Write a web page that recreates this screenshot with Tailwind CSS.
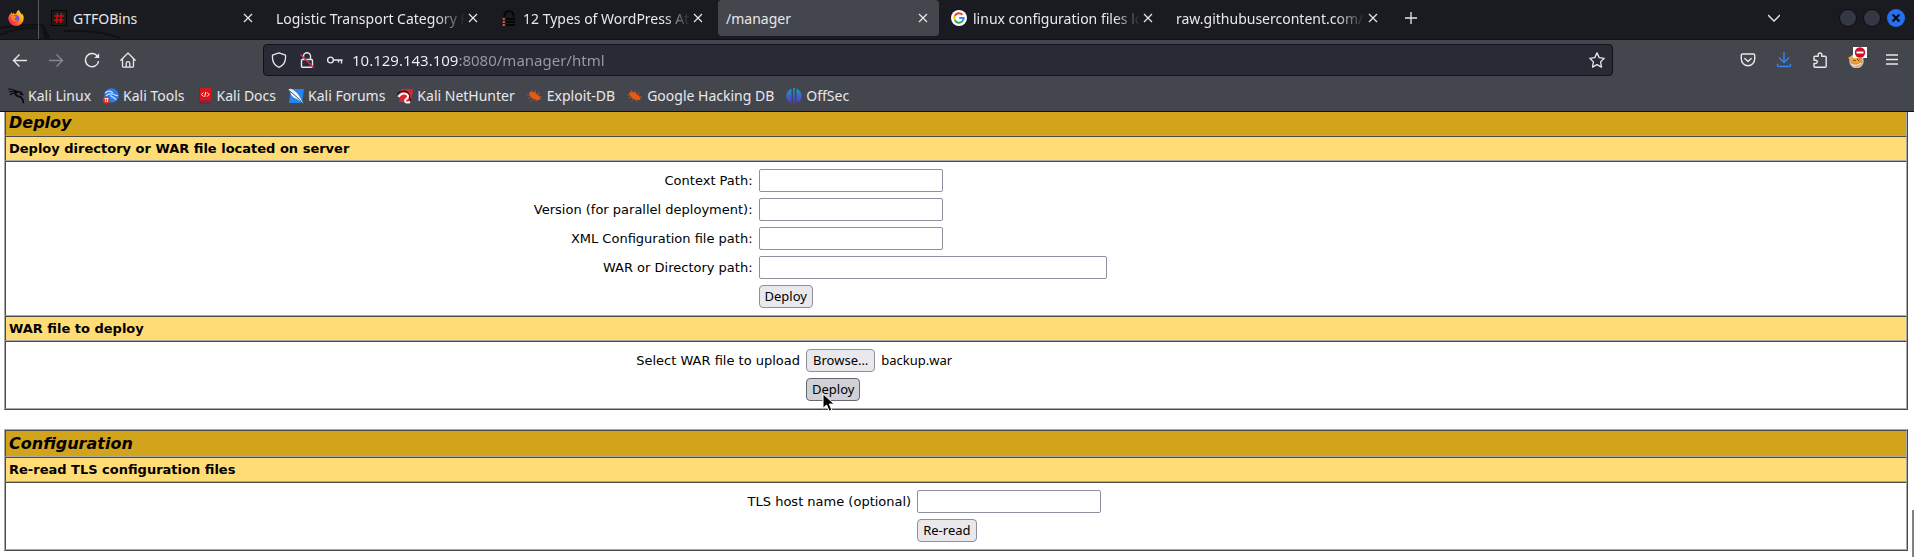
<!DOCTYPE html>
<html lang="en">
<head>
<meta charset="utf-8">
<title>/manager</title>
<script src="https://cdn.jsdelivr.net/npm/@tailwindcss/browser@4"></script>
</head>
<body class="relative flex min-h-screen flex-col overflow-x-hidden bg-white font-['Noto_Sans',sans-serif] text-[14px] text-[#e8e8ea]">

<!-- Tab strip -->
<header class="relative flex h-10 items-start border-b border-[#111216] bg-[#1a1b20]">
  <svg class="absolute bottom-0 left-0 h-4 w-32" viewBox="0 0 128 16" fill="none" aria-hidden="true"><path d="M0 5C14 3 30 1 43 2l6 13M0 12c14-6 26-8 38-7M64 8c20-1 40 1 56 7" stroke="#101115" stroke-width="2"/><path d="M42 3l8 13H44z" fill="#101115"/></svg>
  <div class="relative flex h-[39px] w-[39px] items-start border-r border-[#5a5b60] pt-[10px] pl-2">
    <svg class="size-4" viewBox="0 0 16 16" aria-label="Firefox">
      <defs><linearGradient id="ff" x1="1" y1="0" x2="0" y2="1"><stop offset="0" stop-color="#fff44f"/><stop offset=".45" stop-color="#ff980e"/><stop offset=".75" stop-color="#ff3647"/><stop offset="1" stop-color="#e31587"/></linearGradient></defs>
      <path d="M15.4 5.7c-.4-.9-1.1-1.8-1.7-2.1.4.8.7 1.600.7 2.100C13.500 3.500 12 2.600 10.800.100 9 1 8.300 2.800 8.200 3.700c-.6 0-1.300.2-1.700.4C6 3.700 6 3 6.100 2.500c-.8.3-1.400 1-1.800 1.500C4 3.600 4 2.700 4 2.300 3 2.800 2.500 3.500 2 4.200.8 5.700.300 7 .300 8.500a7.700 7.500 0 0 0 15.400 0c0-1-.1-2-.3-2.800z" fill="url(#ff)"/>
      <circle cx="7.800" cy="8.500" r="3.600" fill="#7a4fe8"/><path d="M3.500 6c1.200-.7 2.500-.5 3.300.3l1.700.4c0 1-1.600 1.100-2 2.100.3 1.800 2.400 1.900 3.800 1-1 2-5.500 2.500-6.800-1.300z" fill="#ff8a16"/>
    </svg>
  </div>
  <nav class="relative ml-0.5 flex min-w-0" aria-label="Tabs">
    <div class="mx-0.5 flex h-9 w-[221px] items-center rounded-b px-2">
      <svg class="mr-1.5 size-4 shrink-0" viewBox="0 0 16 16"><rect width="16" height="16" fill="#050505"/><rect x="1" y="1" width="14" height="14" fill="#1b1b1b"/><path d="M6.500 3L5.500 13M10.500 3L9.500 13M3.500 6h9.500M3 10h9.500" stroke="#c80f12" stroke-width="1.500"/></svg>
      <span class="min-w-0 flex-1 whitespace-nowrap">GTFOBins</span>
      <button class="flex w-4 shrink-0 justify-center" aria-label="Close tab"><svg class="size-2.5" viewBox="0 0 10 10" stroke="currentColor" stroke-width="1.200"><path d="M1 1l8 8M9 1L1 9"/></svg></button>
    </div>
    <div class="mx-0.5 flex h-9 w-[221px] items-center rounded-b px-2">
      <span class="min-w-0 flex-1 mask-r-from-85% mask-r-to-100% whitespace-nowrap">Logistic Transport Category F</span>
      <button class="flex w-4 shrink-0 justify-center" aria-label="Close tab"><svg class="size-2.5" viewBox="0 0 10 10" stroke="currentColor" stroke-width="1.200"><path d="M1 1l8 8M9 1L1 9"/></svg></button>
    </div>
    <div class="mx-0.5 flex h-9 w-[221px] items-center rounded-b px-2">
      <svg class="mr-1.5 size-4 shrink-0" viewBox="0 0 16 16" fill="none"><path d="M3.500 6.500V5.500a4.500 4.500 0 0 1 9 0v1" stroke="#050505" stroke-width="2"/><path d="M5 9h9M5 12h9M5 15h9" stroke="#050505" stroke-width="2"/><path d="M2.800 8v8" stroke="#e8573a" stroke-width="2" stroke-dasharray="2 1"/></svg>
      <span class="min-w-0 flex-1 mask-r-from-85% mask-r-to-100% whitespace-nowrap">12 Types of WordPress Att</span>
      <button class="flex w-4 shrink-0 justify-center" aria-label="Close tab"><svg class="size-2.5" viewBox="0 0 10 10" stroke="currentColor" stroke-width="1.200"><path d="M1 1l8 8M9 1L1 9"/></svg></button>
    </div>
    <div class="mx-0.5 flex h-9 w-[221px] items-center rounded bg-[#44464d] px-2">
      <span class="min-w-0 flex-1 whitespace-nowrap">/manager</span>
      <button class="flex w-4 shrink-0 justify-center" aria-label="Close tab"><svg class="size-2.5" viewBox="0 0 10 10" stroke="currentColor" stroke-width="1.200"><path d="M1 1l8 8M9 1L1 9"/></svg></button>
    </div>
    <div class="mx-0.5 flex h-9 w-[221px] items-center rounded-b px-2">
      <svg class="mr-1.5 size-4 shrink-0" viewBox="0 0 16 16" fill="none"><circle cx="8" cy="8" r="8" fill="#fff"/><g stroke-width="2"><path d="M11.400 4.700A4.700 4.700 0 0 0 3.800 5.900" stroke="#ea4335"/><path d="M3.800 5.900a4.700 4.700 0 0 0 0 4.200" stroke="#fbbc05"/><path d="M3.800 10.100a4.700 4.700 0 0 0 7.300 1.500" stroke="#34a853"/><path d="M11.100 11.600A4.700 4.700 0 0 0 12.700 8H8.200" stroke="#4285f4"/></g></svg>
      <span class="min-w-0 flex-1 mask-r-from-85% mask-r-to-100% whitespace-nowrap">linux configuration files lo</span>
      <button class="flex w-4 shrink-0 justify-center" aria-label="Close tab"><svg class="size-2.5" viewBox="0 0 10 10" stroke="currentColor" stroke-width="1.200"><path d="M1 1l8 8M9 1L1 9"/></svg></button>
    </div>
    <div class="mx-0.5 flex h-9 w-[221px] items-center rounded-b px-2">
      <span class="min-w-0 flex-1 mask-r-from-85% mask-r-to-100% whitespace-nowrap">raw.githubusercontent.com/t</span>
      <button class="flex w-4 shrink-0 justify-center" aria-label="Close tab"><svg class="size-2.5" viewBox="0 0 10 10" stroke="currentColor" stroke-width="1.200"><path d="M1 1l8 8M9 1L1 9"/></svg></button>
    </div>
  </nav>
  <button class="flex h-9 w-10 items-center justify-center" aria-label="New tab"><svg class="size-3" viewBox="0 0 12 12" stroke="currentColor" stroke-width="1.300"><path d="M6 0v12M0 6h12"/></svg></button>
  <div class="ml-auto flex h-9 items-center gap-1.5 pr-[9px]">
    <button class="mr-[53px] flex" aria-label="List all tabs"><svg class="h-2 w-3" viewBox="0 0 12 8" fill="none" stroke="currentColor" stroke-width="1.300"><path d="M0 1l6 6 6-6"/></svg></button>
    <button class="size-[18px] rounded-full border border-[#0c0d11] bg-[#343844]" aria-label="Minimize"></button>
    <button class="size-[18px] rounded-full border border-[#0c0d11] bg-[#343844]" aria-label="Maximize"></button>
    <button class="flex size-[18px] items-center justify-center rounded-full bg-[#2470ee]" aria-label="Close window"><svg class="size-2" viewBox="0 0 8 8" stroke="#0b0d16" stroke-width="2.200"><path d="M.5.5l7 7M7.500.5l-7 7"/></svg></button>
  </div>
</header>

<!-- Toolbar and bookmarks -->
<div class="border-b border-[#111216] bg-[#44464d]">
  <div class="flex items-center pt-1 pr-[14px] pl-3">
    <div class="flex items-center gap-5">
      <button aria-label="Back"><svg class="size-4" viewBox="0 0 16 16" fill="none" stroke="currentColor" stroke-width="1.400"><path d="M15 8.500H1.500M7.500 2.500l-6 6 6 6"/></svg></button>
      <button class="text-[#86878c]" aria-label="Forward" disabled><svg class="size-4" viewBox="0 0 16 16" fill="none" stroke="currentColor" stroke-width="1.400"><path d="M1 8.500h13.500M8.500 2.500l6 6-6 6"/></svg></button>
      <button aria-label="Reload"><svg class="size-4" viewBox="0 0 16 16" fill="none" stroke="currentColor" stroke-width="1.500"><path d="M13.700 4.700A6.600 6.600 0 1 0 14.600 9"/><path d="M15.200 1.200v4.900h-5z" fill="currentColor" stroke="none"/></svg></button>
      <button aria-label="Home"><svg class="size-4" viewBox="0 0 16 16" fill="none" stroke="currentColor" stroke-width="1.300" stroke-linejoin="round" stroke-linecap="round"><path d="M.8 8.200L8 1l7.200 7.200M2.500 7v7c0 .8.400 1.200 1.200 1.200h8.600c.8 0 1.200-.4 1.200-1.200V7M6.200 15v-3.800c0-2.200 3.600-2.200 3.600 0V15"/></svg></button>
    </div>
    <div class="w-[127px] shrink"></div>
    <div class="flex h-8 min-w-0 flex-1 items-center rounded border border-[#101219] bg-[#282a36] px-[7px]">
      <svg class="mr-3 size-4 shrink-0" viewBox="0 0 16 16" fill="none" stroke="currentColor" stroke-width="1.300" stroke-linejoin="round"><path d="M8 .8l6.500 2.400C15 8.800 13 13.300 8 15.300 3 13.300 1 8.800 1.500 3.200z"/></svg>
      <svg class="mr-3 size-4 shrink-0" viewBox="0 0 16 16" fill="none" stroke="currentColor" stroke-width="1.400"><path d="M4.500 7.500V4.300a3.500 3.500 0 0 1 7 0v3.200M3.500 7.500h9c.6 0 1 .4 1 1v5.800c0 .6-.4 1-1 1h-9c-.6 0-1-.4-1-1V8.500c0-.6.400-1 1-1z"/><path d="M1.500 2.500l13 13" stroke="#e22850" stroke-width="1.600"/></svg>
      <svg class="mr-[9px] size-4 shrink-0" viewBox="0 0 16 16" fill="none" stroke="currentColor" stroke-width="1.400"><circle cx="3.500" cy="8" r="2.900"/><path d="M6.400 8h9.200M14.500 8v3.500M11.500 8v2.500"/></svg>
      <input type="text" aria-label="Address" value="10.129.143.109:8080/manager/html" class="h-7 min-w-0 flex-1 bg-linear-to-r from-[#f4f4f6] from-[107px] to-[#9a9ba2] to-[107px] bg-clip-text text-[15px] text-transparent outline-none">
      <button aria-label="Bookmark this page"><svg class="size-4" viewBox="0 0 16 16" fill="none" stroke="currentColor" stroke-width="1.300" stroke-linejoin="round"><path d="M8 .9l2.200 4.700 5 .7-3.600 3.600.9 5.200L8 12.600l-4.500 2.500.9-5.200L.8 6.300l5-.7z"/></svg></button>
    </div>
    <div class="w-[127px] shrink"></div>
    <div class="flex items-center gap-5">
      <button aria-label="Save to Pocket"><svg class="size-4" viewBox="0 0 16 16" fill="none" stroke="currentColor" stroke-width="1.400" stroke-linejoin="round" stroke-linecap="round"><path d="M2.500 2h11c.7 0 1.200.5 1.200 1.200V7a6.700 6.700 0 0 1-13.400 0V3.200C1.300 2.500 1.800 2 2.500 2zM4.800 6.500L8 9.500l3.200-3"/></svg></button>
      <button aria-label="Downloads"><svg class="size-4" viewBox="0 0 16 16" fill="none" stroke="#3584f7" stroke-width="1.400" stroke-linecap="round" stroke-linejoin="round"><path d="M8 .5V10M3.500 6L8 10.500 12.500 6M1.500 12.500c0 1.500.5 2 1.500 2h10c1 0 1.500-.5 1.500-2"/></svg></button>
      <button aria-label="Extensions"><svg class="size-4" viewBox="0 0 16 16" fill="none" stroke="currentColor" stroke-width="1.400" stroke-linejoin="round"><path d="M2 5.200c0-.6.400-1 1-1h3.200V2.800c0-2.400 3.600-2.400 3.600 0v1.400h3.400c.6 0 1 .4 1 1v9c0 .6-.4 1-1 1H3c-.6 0-1-.4-1-1v-2.700h1.500c2.400 0 2.400-3.300 0-3.300H2z"/></svg></button>
      <button class="relative" aria-label="Proxy disabled"><svg class="size-4" viewBox="0 0 16 16" fill="none"><circle cx="8.500" cy="9" r="6.500" fill="#e8902e" stroke="#c9c5be" stroke-width="1.500"/><path d="M0 6l3-2 1 2c2-2 5-2 7 0l-3 1 4 3-6 1-3-2z" fill="#f7a541"/><path d="M5 8l3 1M9 7l2 2" stroke="#6a4527"/><path d="M4 12c2 2 6 2 9-1" stroke="#e9e5df" stroke-width="1.500"/></svg><svg class="absolute -top-[5px] left-[5px] h-[11px] w-[14px]" viewBox="0 0 14 11"><rect width="14" height="11" fill="#fff"/><circle cx="7" cy="5.500" r="5.200" fill="#c4142d"/><path d="M3.500 5.500h7" stroke="#fff" stroke-width="2"/></svg></button>
      <button aria-label="Menu"><svg class="size-4" viewBox="0 0 16 16" stroke="currentColor" stroke-width="1.300"><path d="M2 3h12M2 7.500h12M2 12h12"/></svg></button>
    </div>
  </div>
  <nav class="flex h-[35px] items-center gap-3 px-2 pt-1 whitespace-nowrap" aria-label="Bookmarks">
    <a href="#" class="flex items-center gap-1"><svg class="size-4" viewBox="0 0 16 16" fill="none" stroke="#08090b"><path d="M0 1c4 .2 7 .8 9.500 2.800M1 4c3-1.200 6-1 9 .2M2 7c2-2 4-2.500 7-2" stroke-width="1.100"/><path d="M8.500 3.500c-2.500 3 0 4.500 3 5.200 2.500.6 3.500 2.300 4 6.500" stroke-width="1.800"/><path d="M9 3.500l4 .8 1.500 2.200-3-.6" stroke-width="1.300"/></svg>Kali Linux</a>
    <a href="#" class="flex items-center gap-1"><svg class="size-4" viewBox="0 0 16 16" fill="none"><circle cx="8.500" cy="7.500" r="7.200" fill="#2a7af0"/><path d="M2 5c3-2.500 6-2 8 0M3 8c2-2.500 4-2.500 6-2 3 .5 4 2 6 1.500M8 7c-1 2 4 2 5 5" stroke="#c5e0ff" stroke-width="1.200"/><circle cx="3.500" cy="12" r="3.500" fill="#e3342f"/><path d="M1.500 10.500h4M2.700 10.500v3.500M4.500 10.500v3.500" stroke="#fff" stroke-width=".8"/></svg>Kali Tools</a>
    <a href="#" class="flex items-center gap-1"><svg class="size-4" viewBox="0 0 16 16" fill="none"><path d="M2 12.500h12V16H3.500A1.500 1.500 0 0 1 2 14.500V2l1.500-2z" fill="#b00d18"/><path d="M4 13.500h10v1H4z" fill="#364777"/><path d="M3 0h11v12.500H3z" fill="#d8151b"/><path d="M6.300 4.500L4.500 6.500l1.800 2M10.200 4.500L12 6.500l-1.800 2M8.800 4L7.600 9" stroke="#fff"/></svg>Kali Docs</a>
    <a href="#" class="flex items-center gap-1"><svg class="size-4" viewBox="0 0 16 16"><path d="M3 1h13l-2 14H1z" fill="#2584ee"/><path d="M0 1.500l2.500-.8c3 1 7 4 9 7.800l3.800 7-6.300-4.500C5.500 10 2.500 7 2.500 4.500z" fill="#f3f5f8"/><path d="M0 1.500L11 11l3 4" stroke="#111" stroke-width=".7" fill="none"/></svg>Kali Forums</a>
    <a href="#" class="flex items-center gap-1"><svg class="size-4" viewBox="0 0 16 16" fill="none"><path d="M4 1h12l-2 13H2z" fill="#d82732"/><path d="M0 6c3-3 9-4 11-1 2 3 1 5 3 8" stroke="#111" stroke-width="1.200"/><path d="M1.500 9c2-4.500 8-4.500 9.500-1.500 1.200 3-3.500 3.500-3 5.500.3 1.500 2.500 2 5 1" stroke="#f5f5f5" stroke-width="2"/></svg>Kali NetHunter</a>
    <a href="#" class="flex items-center gap-1"><svg class="size-4" viewBox="0 0 16 16" fill="none"><path d="M2 5c2-2 5-1.500 7 .5l4 3.500c1 1.500.5 3-1 3C8 12.500 3 10 2 5z" fill="#ec5a10"/><path d="M4 2l2 4M8 2.500l1 4M12 4l-1 4M15 8.500l-3 1M0 7h4M1 10.500l4-2M4 13.500l3-3M9 14l1-3" stroke="#b65a30" stroke-width=".8"/></svg>Exploit-DB</a>
    <a href="#" class="flex items-center gap-1"><svg class="size-4" viewBox="0 0 16 16" fill="none"><path d="M2 5c2-2 5-1.500 7 .5l4 3.500c1 1.500.5 3-1 3C8 12.500 3 10 2 5z" fill="#ec5a10"/><path d="M4 2l2 4M8 2.500l1 4M12 4l-1 4M15 8.500l-3 1M0 7h4M1 10.500l4-2M4 13.500l3-3M9 14l1-3" stroke="#b65a30" stroke-width=".8"/></svg>Google Hacking DB</a>
    <a href="#" class="flex items-center gap-1"><svg class="size-4" viewBox="0 0 16 16"><defs><linearGradient id="os" x1="0" y1="0" x2="0" y2="1"><stop offset="0" stop-color="#13a5c4"/><stop offset="1" stop-color="#5b2bd0"/></linearGradient></defs><path d="M5.500.8v14C2 14 .3 11 .3 8S2 2 5.500.8zM7.200 0h1.600v16H7.200zM10.500.8C14 2 15.700 5 15.700 8s-1.700 6-5.200 6.800z" fill="url(#os)"/></svg>OffSec</a>
  </nav>
</div>

<!-- Manager page -->
<main class="flex-1 bg-white pr-1.5 pl-1 font-['DejaVu_Sans',sans-serif] text-[13px] text-black">
  <section class="border-x border-b border-r-[#4b4b4b] border-b-[#4b4b4b] border-l-[#a9a9a9]">
    <h2 class="flex h-6 items-center border-x border-b border-r-[#a9a9a9] border-b-[#a9a9a9] border-l-[#4b4b4b] bg-[#d2a41c] px-[3px] pb-0.5 text-[16px] font-bold italic">Deploy</h2>
    <h3 class="flex h-[25px] items-center border border-t-[#4b4b4b] border-r-[#a9a9a9] border-b-[#a9a9a9] border-l-[#4b4b4b] bg-[#ffdc75] px-[3px] font-bold">Deploy directory or WAR file located on server</h3>
    <form class="grid grid-cols-[39.45%_1fr] items-center gap-y-1.5 border border-t-[#4b4b4b] border-r-[#a9a9a9] border-b-[#a9a9a9] border-l-[#4b4b4b] py-[7px]">
      <label for="path" class="pr-[3px] text-right">Context Path:</label>
      <div class="flex pl-[3px]"><input id="path" type="text" class="h-[23px] w-[184px] rounded-xs border border-[#8f8f9d]"></div>
      <label for="version" class="pr-[3px] text-right">Version (for parallel deployment):</label>
      <div class="flex pl-[3px]"><input id="version" type="text" class="h-[23px] w-[184px] rounded-xs border border-[#8f8f9d]"></div>
      <label for="xml" class="pr-[3px] text-right">XML Configuration file path:</label>
      <div class="flex pl-[3px]"><input id="xml" type="text" class="h-[23px] w-[184px] rounded-xs border border-[#8f8f9d]"></div>
      <label for="war" class="pr-[3px] text-right">WAR or Directory path:</label>
      <div class="flex pl-[3px]"><input id="war" type="text" class="h-[23px] w-[348px] rounded-xs border border-[#8f8f9d]"></div>
      <div class="col-start-2 flex pl-[3px] font-['Noto_Sans',sans-serif]"><button type="button" class="flex h-[23px] items-center rounded border border-[#8f8f9d] bg-[#e9e9ed] px-[5px]">Deploy</button></div>
    </form>
    <h3 class="flex h-[25px] items-center border border-t-[#4b4b4b] border-r-[#a9a9a9] border-b-[#a9a9a9] border-l-[#4b4b4b] bg-[#ffdc75] px-[3px] font-bold">WAR file to deploy</h3>
    <form class="grid grid-cols-[41.95%_1fr] items-center gap-y-1.5 border border-t-[#4b4b4b] border-r-[#a9a9a9] border-b-[#a9a9a9] border-l-[#4b4b4b] py-[7px]">
      <label for="upload" class="pr-[3px] text-right">Select WAR file to upload</label>
      <div class="flex items-center pl-[3px] font-['Noto_Sans',sans-serif]">
        <input id="upload" type="file" class="sr-only">
        <button type="button" class="flex h-[23px] items-center rounded border border-[#8f8f9d] bg-[#e9e9ed] px-1.5">Browse…</button>
        <span class="ml-1.5">backup.war</span>
      </div>
      <div class="col-start-2 flex pl-[3px] font-['Noto_Sans',sans-serif]">
        <button type="button" class="relative flex h-[23px] items-center rounded border border-[#676774] bg-[#d0d0d7] px-[5px]">Deploy
          <svg class="absolute top-[14px] left-[15px] h-5 w-[14px]" viewBox="0 0 14 20" aria-hidden="true"><path d="M1 .8v14.400l3.600-3.200 2.600 6.200 2.700-1.100-2.600-6h4.900z" fill="#050505" stroke="#fff"/></svg>
        </button>
      </div>
    </form>
  </section>

  <section class="mt-[19px] border border-t-[#a9a9a9] border-r-[#4b4b4b] border-b-[#4b4b4b] border-l-[#a9a9a9]">
    <h2 class="flex h-[27px] items-center border border-t-[#4b4b4b] border-r-[#a9a9a9] border-b-[#a9a9a9] border-l-[#4b4b4b] bg-[#d2a41c] px-[3px] text-[16px] font-bold italic">Configuration</h2>
    <h3 class="flex h-[25px] items-center border border-t-[#4b4b4b] border-r-[#a9a9a9] border-b-[#a9a9a9] border-l-[#4b4b4b] bg-[#ffdc75] px-[3px] font-bold">Re-read TLS configuration files</h3>
    <form class="grid grid-cols-[47.8%_1fr] items-center gap-y-1.5 border border-t-[#4b4b4b] border-r-[#a9a9a9] border-b-[#a9a9a9] border-l-[#4b4b4b] py-[7px]">
      <label for="tls" class="pr-[3px] text-right">TLS host name (optional)</label>
      <div class="flex pl-[3px]"><input id="tls" type="text" class="h-[23px] w-[184px] rounded-xs border border-[#8f8f9d]"></div>
      <div class="col-start-2 flex pl-[3px] font-['Noto_Sans',sans-serif]"><button type="button" class="flex h-[23px] items-center rounded border border-[#8f8f9d] bg-[#e9e9ed] px-[5px]">Re-read</button></div>
    </form>
  </section>
</main>
<div class="absolute right-0 bottom-0 h-[47px] w-0.5 bg-[#808282]" aria-hidden="true"></div>
</body>
</html>
